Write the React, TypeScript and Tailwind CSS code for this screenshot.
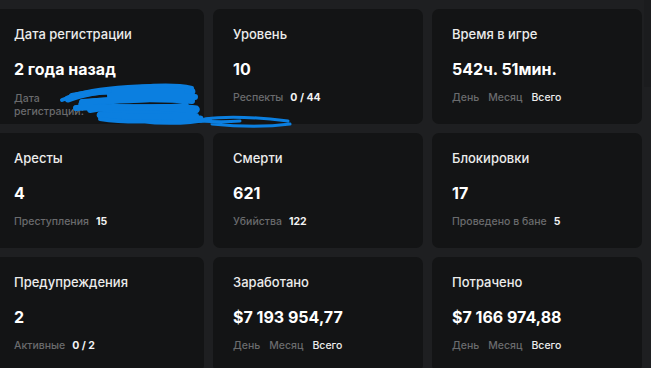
import React from "react";

type Sub =
  | { kind: "kv"; label: string; value: string }
  | { kind: "tabs" }
  | { kind: "reg" };

const cards: { title: string; value: string; sub: Sub }[] = [
  { title: "Дата регистрации", value: "2 года назад", sub: { kind: "reg" } },
  { title: "Уровень", value: "10", sub: { kind: "kv", label: "Респекты", value: "0 / 44" } },
  { title: "Время в игре", value: "542ч. 51мин.", sub: { kind: "tabs" } },
  { title: "Аресты", value: "4", sub: { kind: "kv", label: "Преступления", value: "15" } },
  { title: "Смерти", value: "621", sub: { kind: "kv", label: "Убийства", value: "122" } },
  { title: "Блокировки", value: "17", sub: { kind: "kv", label: "Проведено в бане", value: "5" } },
  { title: "Предупреждения", value: "2", sub: { kind: "kv", label: "Активные", value: "0 / 2" } },
  { title: "Заработано", value: "$7 193 954,77", sub: { kind: "tabs" } },
  { title: "Потрачено", value: "$7 166 974,88", sub: { kind: "tabs" } },
];

function SubRow({ sub }: { sub: Sub }) {
  if (sub.kind === "tabs") {
    return (
      <div className="mt-[11px] flex gap-[9px] text-[10.5px] leading-[14px] font-medium">
        <span className="text-[#6a6b6d]">День</span>
        <span className="text-[#6a6b6d]">Месяц</span>
        <span className="text-[#ececec]">Всего</span>
      </div>
    );
  }
  if (sub.kind === "reg") {
    return (
      <div className="mt-[12px] flex text-[10.5px] leading-[13px] font-medium">
        <span className="w-[70px] text-[#6a6b6d]">Дата регистрации:</span>
      </div>
    );
  }
  return (
    <div className="mt-[11px] flex gap-[7px] text-[10.5px] leading-[14px]">
      <span className="text-[#6a6b6d] font-medium">{sub.label}</span>
      <span className="text-[#f2f2f2] font-bold">{sub.value}</span>
    </div>
  );
}

export default function App() {
  return (
    <div
      className="relative w-[651px] h-[368px] overflow-hidden bg-[#1e1f21]"
      style={{ fontFamily: "Inter, 'Noto Sans', sans-serif" }}
    >
      <div className="ml-[-6px] pt-[9px] grid grid-cols-[210px_210px_210px] gap-[9px]">
        {cards.map((c) => (
          <div key={c.title} className="h-[115px] rounded-[7px] bg-[#131415] pl-5 pt-4">
            <div className="text-[13px] leading-[18px] font-medium text-[#ececec]">{c.title}</div>
            <div className="mt-[15px] text-[16px] leading-[22px] font-bold text-white">{c.value}</div>
            <SubRow sub={c.sub} />
          </div>
        ))}
      </div>
      <div className="absolute right-0 top-0 w-[7px] h-[87px] bg-[#1b1c1e]" />
      <svg
        className="absolute left-0 top-0 pointer-events-none"
        width="651"
        height="368"
        viewBox="0 0 651 368"
        fill="none"
      >
        <g stroke="#0b7fe0" strokeLinecap="round" strokeLinejoin="round">
          <path strokeWidth="7" d="M68,99 C95,88 160,85 190,90 C200,94 170,98 120,100 C85,102 70,104 92,107 C120,110 180,105 196,109 C200,113 150,115 112,114 C92,113 97,118 130,119 C160,120 190,117 200,119" />
          <path strokeWidth="6" d="M72,96 C100,90 150,88 182,92 M82,102 C110,100 160,98 192,101 M76,108 C110,106 170,107 194,111 M100,115 C130,117 170,116 196,116 M90,110 C120,104 150,110 186,106 M110,96 C140,93 170,96 195,97" />
          <path strokeWidth="4" d="M62,100 C72,96 90,92 110,91 M140,121 C165,124 190,123 210,119 M140,87 C160,85 178,85 192,88 M100,119 C120,122 140,122 160,121" />
          <path strokeWidth="3" d="M205,119 C225,116 255,117 288,121 M212,124 C240,127 268,127 290,124 M200,121 C215,122 228,122 240,121" />
        </g>
      </svg>
    </div>
  );
}
